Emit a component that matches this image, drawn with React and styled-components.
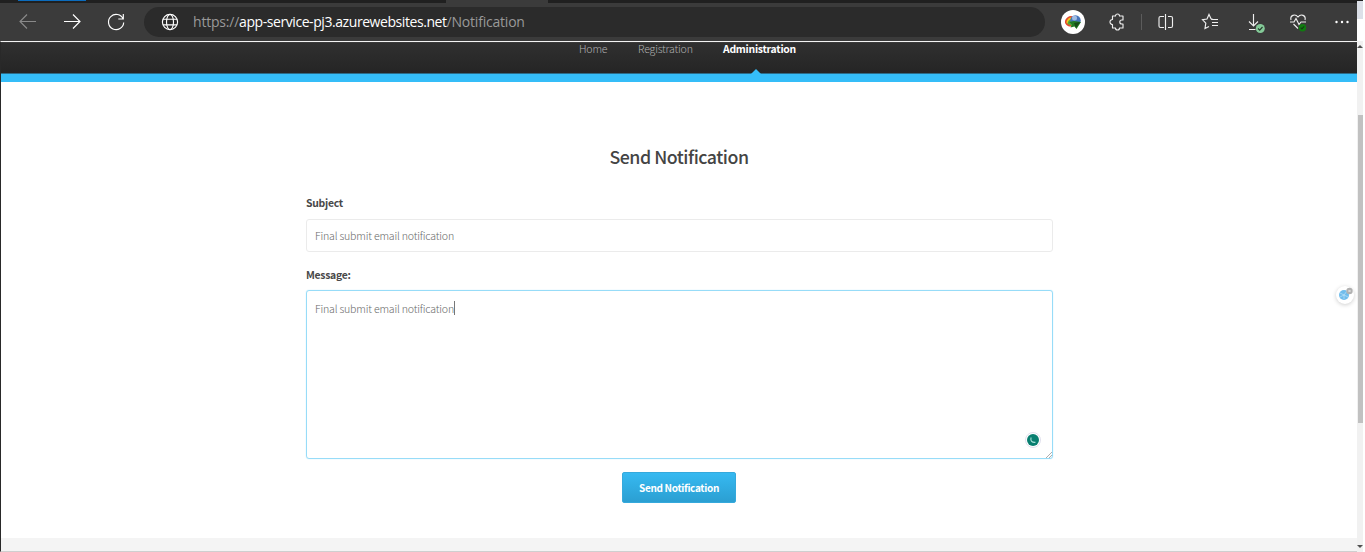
import React from "react";
import styled, { createGlobalStyle } from "styled-components";

const Global = createGlobalStyle`
  *{box-sizing:border-box}
  body{margin:0;background:#fff;overflow:hidden}
`;
const uiFont = '"Open Sans","Noto Sans",sans-serif';
const siteFont = '"Noto Sans CJK SC","Noto Sans",sans-serif';

const Window = styled.div`
  width:1363px;height:552px;display:flex;font-family:${siteFont};background:#fff;
`;
const Browser = styled.div`width:1357px;display:flex;flex-direction:column;`;
const TabStrip = styled.div`
  height:3px;background:#202020;display:flex;align-items:flex-start;
`;
const Profile = styled.div`width:68px;height:1px;margin-left:18px;background:#0c6cbd;`;
const ActiveTab = styled.div`width:102px;height:3px;margin-left:360px;background:#3b3b3b;`;
const Toolbar = styled.div`
  height:38px;background:#3b3b3b;display:flex;align-items:center;
`;
const NavIcons = styled.div`display:flex;width:144px;padding-left:18px;gap:24px;color:#fff;`;
const AddressBar = styled.div`
  width:901px;height:30px;border-radius:15px;background:#2b2b2b;display:flex;align-items:center;
  padding-left:16px;gap:13px;color:#fff;
`;
const Url = styled.div`
  font:14px/20px ${uiFont};letter-spacing:-0.21px;color:#999;white-space:nowrap;
  b{font-weight:400;color:#fff;letter-spacing:-0.43px;}
`;
const Tools = styled.div`flex:1;display:flex;align-items:center;color:#eee;`;
const Icon = styled.svg`
  display:block;flex:none;fill:none;stroke:${p => p.$ink || "currentColor"};stroke-width:1.15;overflow:visible;
  margin-left:${p => p.$gap || 0}px;opacity:${p => p.$dim ? 0.4 : 1};
`;
const ExtensionBadge = styled.div`
  width:24px;height:24px;border-radius:50%;background:#fff;margin-left:16px;
  display:flex;align-items:center;justify-content:center;
`;
const Separator = styled.div`width:1px;height:16px;background:#5c5c5c;margin-left:15px;`;

const Page = styled.div`
  flex:1;border-left:1px solid #292929;border-top:1px solid #f4f4f4;border-bottom:1px solid #cfcfcf;
  display:flex;flex-direction:column;
`;
const SiteNav = styled.nav`
  height:40px;background:linear-gradient(#303030,#252525 31px,#2c6c89 31px,#2c6c89 32px,#35bdf8 32px);
  box-shadow:inset 0 1px #3a3a3a;display:flex;padding-left:578px;
`;
const NavLink = styled.a`
  width:${p => p.$w}px;margin-right:${p => p.$gap || 0}px;height:32px;
  font-size:${p => p.$active ? 10.4 : 10.6}px;line-height:14px;white-space:nowrap;
  letter-spacing:${p => p.$active ? -0.25 : -0.18}px;
  color:${p => p.$active ? "#fff" : "#b0b0b0"};font-weight:${p => p.$active ? 700 : 300};
  display:flex;flex-direction:column;justify-content:space-between;
`;
const Pointer = styled.span`
  align-self:center;width:0;height:0;margin-right:7px;
  border:5px solid transparent;border-top:0;border-bottom-color:#35bdf8;
`;
const Form = styled.main`
  width:747px;margin-left:305px;height:456px;display:flex;flex-direction:column;padding-top:61px;
`;
const Title = styled.h1`
  margin:0 1px 0 0;text-align:center;font-size:17.8px;line-height:26px;font-weight:500;color:#444;
  letter-spacing:-0.48px;
`;
const Label = styled.label`
  display:block;font-size:10.4px;line-height:16px;font-weight:600;color:#484848;
  letter-spacing:-0.27px;margin-top:${p => p.$top}px;
`;
const Field = styled.div`
  height:${p => p.$tall ? 169 : 33}px;margin-top:${p => p.$tall ? 7 : 8}px;
  border:1px solid ${p => p.$tall ? "#97dcf8" : "#ebebeb"};border-radius:3px;
  box-shadow:${p => p.$tall ? "0 0 1px #97dcf8" : "none"};
  padding:${p => p.$tall ? "10px 0 0 8px" : "7px 0 0 8px"};
  font-size:10.6px;line-height:17px;font-weight:300;color:#6a6a6a;letter-spacing:-0.19px;
  display:flex;justify-content:space-between;
`;
const Entry = styled.span`height:17px;white-space:nowrap;`;
const Typing = styled(Entry)`height:14px;line-height:15px;border-right:1px solid #777;`;
const Corner = styled.div`
  align-self:flex-end;display:flex;align-items:flex-end;height:27px;
`;
const Assistant = styled.div`
  width:16px;height:16px;border-radius:50%;border:1px solid #e1e1ed;background:#fff;
  display:flex;align-items:center;justify-content:center;margin-bottom:10px;
`;
const SubmitButton = styled.button`
  width:114px;height:31px;margin:13px 0 0 316px;padding:0;border:1px solid #35a9dc;border-radius:2px;
  background:linear-gradient(#36b9f1,#2b9fd2);color:#fff;
  font:700 10px/28px ${siteFont};letter-spacing:-0.32px;text-align:center;
`;
const Footer = styled.footer`flex:1;background:#f4f4f4;`;
const ScrollRail = styled.div`
  width:6px;display:flex;flex-direction:column;background:#f1f1f1;
`;
const RailHead = styled.div`height:41px;background:linear-gradient(#202020 1px,#dce0e8 1px,#dce0e8 19px,#fff 19px);`;
const Arrow = styled.div`
  width:0;height:0;border:3px solid transparent;
  ${p => p.$down ? "border-bottom:0;border-top-color:#505050;margin-top:122px;" : "border-top:0;border-bottom-color:#505050;margin-top:4px;"}
`;
const Thumb = styled.div`height:308px;width:5px;margin:67px 0 0 1px;background:#c1c1c1;`;
const FloatingWidget = styled.div`
  position:absolute;left:1336px;top:286px;width:18px;height:18px;border-radius:50%;
  background:#fff;box-shadow:0 1px 4px #0003;
`;

export default function App() {
  return (
    <>
      <Global />
      <Window>
        <Browser>
          <TabStrip><Profile /><ActiveTab /></TabStrip>
          <Toolbar>
            <NavIcons>
              <Icon $dim width="20" height="20" viewBox="0 0 20 20"><path d="M18 9.500H2M9 2.500 2 9.500l7 7" /></Icon>
              <Icon width="20" height="20" viewBox="0 0 20 20"><path d="M2 9.500h16M11 2.500l7 7-7 7" /></Icon>
              <Icon width="20" height="20" viewBox="0 0 20 20"><path d="M17.1 7A7.6 7.6 0 1 0 17.7 10.5M17.3 2v5h-5" /></Icon>
            </NavIcons>
            <AddressBar>
              <Icon width="20" height="20" viewBox="0 0 20 20">
                <circle cx="10" cy="10" r="7.6" /><ellipse cx="10" cy="10" rx="3.5" ry="7.6" /><path d="M3 7.2h14M3 12.8h14" />
              </Icon>
              <Url>https://<b>app-service-pj3.azurewebsites.net</b>/Notification</Url>
            </AddressBar>
            <Tools>
              <ExtensionBadge>
                <Icon $ink="none" width="18" height="18" viewBox="0 0 18 18">
                  <path d="M1 10a6 6 0 0 1 9-6l-1 9a6 6 0 0 1-8-3Z" fill="#e5482e" />
                  <path d="M2.5 10a5 5 0 0 1 7-5l-1 8Z" fill="#efcb20" />
                  <path d="M3.500 11a5 5 0 0 1 5-5v7Z" fill="#55a73b" />
                  <circle cx="11.500" cy="7.500" r="5.2" fill="#4775ba" />
                  <circle cx="10.500" cy="5" r="2.500" fill="#9fbce4" />
                  <path d="m5 9 5-1 7 1-4.500 7-2-2.500-4 1 1.500-3Z" fill="#217b22" />
                  <path d="m10 10 6-1-4 6Z" fill="#174c18" />
                </Icon>
              </ExtensionBadge>
              <Icon $gap={23} width="18" height="18" viewBox="0 0 18 18">
                <path d="M4.5 3h3a2 2 0 0 1 4 0H15v4h-1.2a2 2 0 0 0 0 4H15v4h-3.5a2 2 0 0 1-4 0h-3v-3.5a2.5 2.5 0 1 1 0-5Z" strokeLinejoin="round" />
              </Icon>
              <Separator />
              <Icon $gap={15} width="18" height="18" viewBox="0 0 18 18">
                <path d="M7 3.500H3.500Q2 3.500 2 5v8Q2 14.500 3.500 14.500H7M11 3.500h3Q15.500 3.500 15.500 5v8q0 1.500-1.500 1.500H11M8.500 1v16" />
              </Icon>
              <Icon $gap={26} width="18" height="18" viewBox="0 0 18 18">
                <path d="M11.500 6 10 5.700 8 1.500 6 6 1.500 6.700l3.300 3.400-.8 5.400L8 13.500M10 6.500h7M11 9.500h6M11 12.500h6" />
              </Icon>
              <Icon $gap={26} width="18" height="18" viewBox="0 0 18 18">
                <path d="M8.500 1v12M4 8.500 8.500 13l4.500-4.500M4 16.500H10.500" />
                <circle cx="15.300" cy="15.500" r="4.500" fill="#84ca98" stroke="none" /><path d="m13 15.500 1.700 1.600 2.800-3.100" stroke="#273d2e" />
              </Icon>
              <Icon $gap={26} width="18" height="18" viewBox="0 0 18 18">
                <path d="M2 7C.8 2.500 6 .2 9 4c3-3.800 8.200-1.500 7 3M1 9h4l2-3.500 3 6 2-2.500h5M4.500 11 9 15.500" />
                <circle cx="13.500" cy="14.700" r="3.700" fill="#107c10" stroke="none" /><path d="m11.700 14.700 1.200 1.200 2.300-2.500" stroke="#153d15" />
              </Icon>
              <Icon $gap={27} $ink="none" width="16" height="18" viewBox="0 0 16 18">
                <g fill="#fff"><circle cx="2.500" cy="9" r="1.200" /><circle cx="8" cy="9" r="1.200" /><circle cx="13.500" cy="9" r="1.200" /></g>
              </Icon>
            </Tools>
          </Toolbar>
          <Page>
            <SiteNav>
              <NavLink $w={28} $gap={31}>Home</NavLink>
              <NavLink $w={55} $gap={30}>Registration</NavLink>
              <NavLink $w={73} $active>Administration<Pointer /></NavLink>
            </SiteNav>
            <Form>
              <Title>Send Notification</Title>
              <Label $top={26}>Subject</Label>
              <Field><Entry>Final submit email notification</Entry></Field>
              <Label $top={15}>Message:</Label>
              <Field $tall>
                <Typing>Final submit email notification</Typing>
                <Corner>
                  <Assistant>
                    <Icon width="12" height="12" viewBox="0 0 12 12">
                      <circle cx="6" cy="6" r="6" fill="#087f70" stroke="none" /><path d="M4 3.500Q3 8.800 8.500 8.300" stroke="#a8e0d8" />
                    </Icon>
                  </Assistant>
                  <Icon $gap={4} $ink="#999" width="7" height="7" viewBox="0 0 7 7"><path d="m1 7 6-6M4 7l3-3" strokeWidth=".8" /></Icon>
                </Corner>
              </Field>
              <SubmitButton>Send Notification</SubmitButton>
            </Form>
            <Footer />
          </Page>
        </Browser>
        <ScrollRail><RailHead /><Arrow /><Thumb /><Arrow $down /></ScrollRail>
      </Window>
      <FloatingWidget>
        <Icon width="18" height="18" viewBox="0 0 18 18">
          <circle cx="8" cy="9" r="5" fill="#71bdec" stroke="none" />
          <path d="m4 7 4 2 3-4M4 11l4-2 4 2M8 9v4" stroke="#d9f0fd" strokeWidth=".5" />
          <circle cx="13.500" cy="5" r="3.200" fill="#b1b1b1" stroke="none" /><path d="m12.500 4 2 2m0-2-2 2" stroke="#eee" strokeWidth=".8" />
        </Icon>
      </FloatingWidget>
    </>
  );
}
